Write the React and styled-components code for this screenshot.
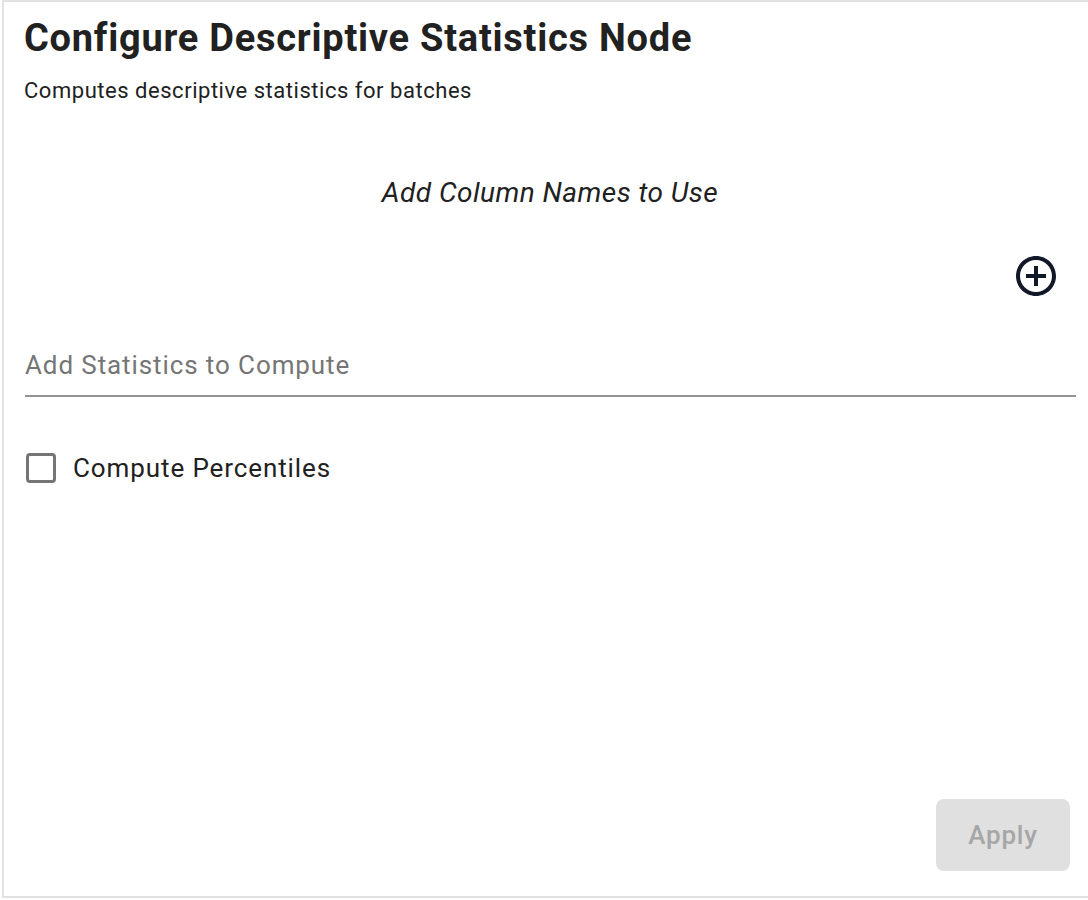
import React from 'react';
import styled, { createGlobalStyle } from 'styled-components';

const GlobalStyle = createGlobalStyle`
  html, body {
    margin: 0;
    padding: 0;
    background: #ffffff;
  }
  body {
    font-family: Roboto, "Liberation Sans", Arial, sans-serif;
    color: #212121;
  }
  * {
    box-sizing: border-box;
  }
`;

const Panel = styled.div`
  display: flex;
  flex-direction: column;
  height: 898px;
  margin-left: 2px;
  padding: 13px 12px 25px 20px;
  border: 2px solid #e2e2e2;
  border-right: none;
`;

const Title = styled.h1`
  margin: 0;
  font-size: 38px;
  line-height: 46px;
  font-weight: 700;
  letter-spacing: 0.75px;
  color: #212121;
`;

const Subtitle = styled.p`
  margin: 16px 0 0;
  font-size: 22px;
  line-height: 28px;
  letter-spacing: 0.53px;
  color: #212121;
`;

const SectionHeader = styled.h2`
  margin: 71px 0 0;
  font-size: 28px;
  line-height: 34px;
  font-weight: 400;
  font-style: italic;
  letter-spacing: 0.45px;
  text-align: center;
  color: #212121;
`;

const IconRow = styled.div`
  display: flex;
  justify-content: flex-end;
  margin-top: 42px;
  padding-right: 16px;
`;

const AddButton = styled.button`
  display: flex;
  padding: 0;
  border: none;
  background: none;
  color: #111827;
  cursor: pointer;
`;

const Field = styled.div`
  margin-top: 49px;
  margin-left: 1px;
  padding-bottom: 14px;
  border-bottom: 2px solid #949494;
`;

const Input = styled.input`
  display: block;
  width: 100%;
  padding: 0;
  border: none;
  outline: none;
  font-family: inherit;
  font-size: 26px;
  line-height: 32px;
  height: 32px;
  letter-spacing: 0.9px;
  color: #212121;
  &::placeholder {
    color: #757575;
  }
`;

const CheckRow = styled.label`
  display: flex;
  align-items: center;
  gap: 17px;
  margin-top: 55px;
  margin-left: 2px;
  cursor: pointer;
`;

const Box = styled.span`
  width: 30px;
  height: 30px;
  border: 3px solid #757575;
  border-radius: 4px;
`;

const CheckLabel = styled.span`
  font-size: 26px;
  line-height: 32px;
  letter-spacing: 0.9px;
  color: #212121;
`;

const Footer = styled.div`
  display: flex;
  justify-content: flex-end;
  margin-top: auto;
  padding-right: 6px;
`;

const ApplyButton = styled.button`
  width: 134px;
  height: 72px;
  border: none;
  border-radius: 8px;
  background: #e0e0e0;
  color: #a6a6a6;
  font-family: inherit;
  font-size: 26px;
  font-weight: 500;
  letter-spacing: 0.8px;
`;

const AddCircleIcon = () => (
  <svg width="48" height="48" viewBox="0 0 24 24" fill="currentColor">
    <path d="M13 7h-2v4H7v2h4v4h2v-4h4v-2h-4V7zm-1-5C6.48 2 2 6.48 2 12s4.48 10 10 10 10-4.48 10-10S17.52 2 12 2zm0 18c-4.41 0-8-3.59-8-8s3.59-8 8-8 8 3.59 8 8-3.59 8-8 8z" />
  </svg>
);

const App = () => (
  <>
    <GlobalStyle />
    <Panel>
      <Title>Configure Descriptive Statistics Node</Title>
      <Subtitle>Computes descriptive statistics for batches</Subtitle>
      <SectionHeader>Add Column Names to Use</SectionHeader>
      <IconRow>
        <AddButton aria-label="Add column">
          <AddCircleIcon />
        </AddButton>
      </IconRow>
      <Field>
        <Input placeholder="Add Statistics to Compute" />
      </Field>
      <CheckRow>
        <Box />
        <CheckLabel>Compute Percentiles</CheckLabel>
      </CheckRow>
      <Footer>
        <ApplyButton disabled>Apply</ApplyButton>
      </Footer>
    </Panel>
  </>
);

export default App;
